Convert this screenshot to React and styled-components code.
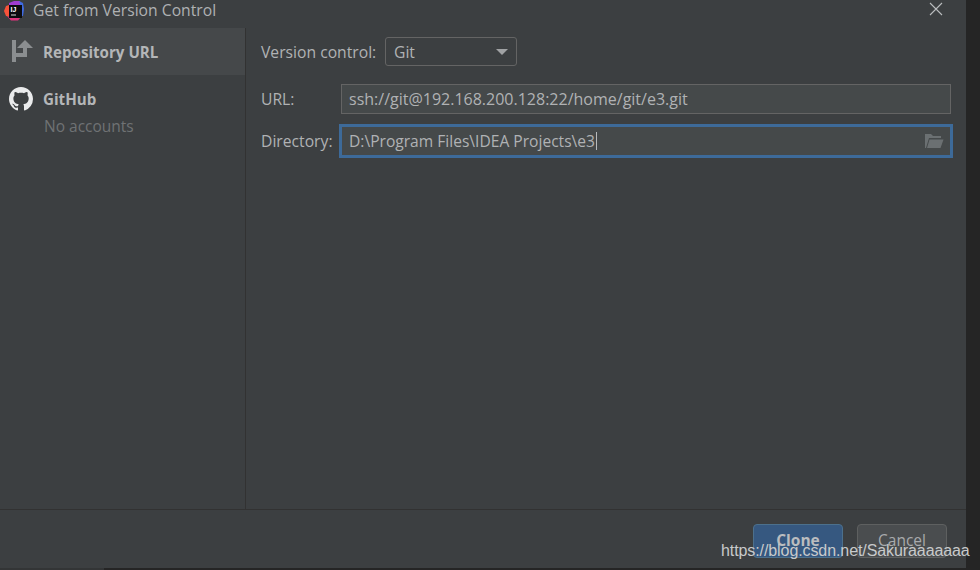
import React from 'react';
import styled, { createGlobalStyle } from 'styled-components';

const Global = createGlobalStyle`
  html, body { margin: 0; padding: 0; background: #262626; }
  body { font-family: "Open Sans", "Noto Sans", sans-serif; }
`;

const Screen = styled.div`
  position: relative;
  width: 980px;
  height: 570px;
  overflow: hidden;
  background: #252525;
`;

const Dialog = styled.div`
  width: 966px;
  height: 568px;
  background: #3c3f41;
  display: flex;
  flex-direction: column;
`;

const BottomEdge = styled.div`
  width: 104px;
  height: 2px;
  background: #333536;
`;

const TitleBar = styled.div`
  height: 28px;
  display: flex;
  align-items: center;
  padding: 0 23px 6px 4px;
  box-sizing: border-box;
  color: #afb1b3;
  font-size: 15.7px;
`;

const Title = styled.span`
  margin-left: 9px;
  margin-top: -2px;
  flex: 1;
`;

const CloseWrap = styled.div`
  display: flex;
  margin-top: -4px;
`;

const Main = styled.div`
  flex: 1;
  display: flex;
  min-height: 0;
  border-bottom: 1px solid #323232;
`;

const Sidebar = styled.div`
  width: 245px;
  border-right: 1px solid #323232;
`;

const SideItem = styled.div`
  height: 47px;
  display: flex;
  align-items: center;
  padding-left: 9px;
  gap: 10px;
  background: ${(p) => (p.$active ? '#45484a' : 'transparent')};
  color: #b4b6b8;
  font-size: 15.15px;
  font-weight: 700;
`;

const SideNote = styled.div`
  padding-left: 44px;
  margin-top: -7px;
  color: #6f7274;
  font-size: 15.5px;
`;

const Form = styled.div`
  flex: 1;
  padding: 9px 15px 0 15px;
  display: flex;
  flex-direction: column;
`;

const Row = styled.div`
  display: flex;
  align-items: center;
  margin-bottom: ${(p) => p.$gap}px;
  color: #b0b2b4;
  font-size: 15.7px;
`;

const Label = styled.div`
  width: ${(p) => p.$width}px;
  flex-shrink: 0;
`;

const Select = styled.div`
  width: 132px;
  height: 29px;
  box-sizing: border-box;
  border: 1px solid #646464;
  border-radius: 3px;
  background: #3c3f41;
  display: flex;
  align-items: center;
  justify-content: space-between;
  padding: 0 8px 0 8px;
`;

const Arrow = styled.div`
  width: 0;
  height: 0;
  border-left: 6px solid transparent;
  border-right: 6px solid transparent;
  border-top: 6px solid #a0a2a4;
`;

const Input = styled.div`
  flex: 1;
  height: 30px;
  box-sizing: border-box;
  border: 1px solid #646464;
  background: #45494a;
  display: flex;
  align-items: center;
  padding: 0 7px;
  font-size: 16px;
`;

const FocusInput = styled(Input)`
  height: 34px;
  border: 3px solid #3d6a99;
  margin-left: -2px;
  margin-right: -2px;
  padding: 0 6px 0 7px;
  font-size: 15.6px;
`;

const Caret = styled.span`
  width: 1px;
  height: 18px;
  background: #b8babc;
  margin-left: 1px;
`;

const Spacer = styled.div`
  flex: 1;
`;

const Footer = styled.div`
  height: 58px;
  display: flex;
  justify-content: flex-end;
  align-items: flex-start;
  gap: 14px;
  padding: 14px 19px 0 0;
  box-sizing: border-box;
`;

const Button = styled.div`
  width: 90px;
  height: 34px;
  box-sizing: border-box;
  border-radius: 4px;
  border: 1px solid ${(p) => (p.$primary ? '#4c708c' : '#5e6060')};
  background: ${(p) => (p.$primary ? '#365880' : '#4a4d4f')};
  color: ${(p) => (p.$primary ? '#bbbdbf' : '#a8aaac')};
  font-size: 15.5px;
  font-weight: ${(p) => (p.$primary ? 700 : 400)};
  text-align: center;
  line-height: 30px;
`;

const Watermark = styled.div`
  position: absolute;
  left: 721px;
  top: 541px;
  color: #c8cacb;
  font-family: "Liberation Sans", Arial, sans-serif;
  font-size: 16px;
  letter-spacing: -0.09px;
  line-height: 20px;
`;

const IdeaIcon = () => (
  <svg width="20" height="22" viewBox="0 0 20 22">
    <path d="M0 11 L2 6 L8 4 L8 17 L2 16 Z" fill="#f8523a" />
    <path d="M5 3 L10 1 L16 1 L17 6 L5 6 Z" fill="#a03cd0" />
    <path d="M15 1 L19 3 L20 9 L19 16 L16 16 L16 4 Z" fill="#3f6ae0" />
    <path d="M3 16 L8 17 L17 17 L14 20.5 L7 20.5 Z" fill="#e0357f" />
    <rect x="5" y="5" width="13" height="13" fill="#0b0b10" />
    <rect x="7" y="14.5" width="5" height="1" fill="#d8d8d8" />
    <text x="6.6" y="12" fontSize="7" fontWeight="700" fill="#fff" fontFamily="Liberation Sans">IJ</text>
  </svg>
);

const RepoIcon = () => (
  <svg width="24" height="23" viewBox="0 0 24 23">
    <path d="M3 0h4v22H3z" fill="#8b8e90" />
    <path d="M7 13h7V8H8l8-8 8 8h-6v9H7z" fill="#8b8e90" />
  </svg>
);

const GithubIcon = () => (
  <svg width="24" height="24" viewBox="0 0 16 16">
    <path
      fill="#eaebec"
      d="M8 0C3.58 0 0 3.58 0 8c0 3.54 2.29 6.53 5.47 7.59.4.07.55-.17.55-.38 0-.19-.01-.82-.01-1.49-2.01.37-2.53-.49-2.69-.94-.09-.23-.48-.94-.82-1.13-.28-.15-.68-.52-.01-.53.63-.01 1.08.58 1.23.82.72 1.21 1.87.87 2.33.66.07-.52.28-.87.51-1.07-1.78-.2-3.64-.89-3.64-3.95 0-.87.31-1.59.82-2.15-.08-.2-.36-1.02.08-2.12 0 0 .67-.21 2.2.82.64-.18 1.32-.27 2-.27s1.36.09 2 .27c1.53-1.04 2.2-.82 2.2-.82.44 1.1.16 1.92.08 2.12.51.56.82 1.27.82 2.15 0 3.07-1.87 3.75-3.65 3.95.29.25.54.73.54 1.48 0 1.07-.01 1.93-.01 2.2 0 .21.15.46.55.38A8.01 8.01 0 0 0 16 8c0-4.42-3.58-8-8-8z"
    />
  </svg>
);

const FolderIcon = () => (
  <svg width="20" height="16" viewBox="0 0 20 16">
    <path d="M1 1h6l2 2h8v2H5L2 15H1z" fill="#6b7072" />
    <path d="M5.5 6.5H19.5L16.5 15H3z" fill="#6b7072" />
  </svg>
);

const CloseIcon = () => (
  <svg width="14" height="14" viewBox="0 0 14 14">
    <path d="M1 1l12 12M13 1L1 13" stroke="#bbbdbf" strokeWidth="1.1" />
  </svg>
);

export default function App() {
  return (
    <Screen>
      <Global />
      <Dialog>
        <TitleBar>
          <IdeaIcon />
          <Title>Get from Version Control</Title>
          <CloseWrap>
            <CloseIcon />
          </CloseWrap>
        </TitleBar>
        <Main>
          <Sidebar>
            <SideItem $active>
              <RepoIcon />
              Repository URL
            </SideItem>
            <SideItem>
              <GithubIcon />
              GitHub
            </SideItem>
            <SideNote>No accounts</SideNote>
          </Sidebar>
          <Form>
            <Row $gap={18}>
              <Label $width={124}>Version control:</Label>
              <Select>
                Git
                <Arrow />
              </Select>
            </Row>
            <Row $gap={10}>
              <Label $width={80}>URL:</Label>
              <Input>ssh://git@192.168.200.128:22/home/git/e3.git</Input>
            </Row>
            <Row $gap={0}>
              <Label $width={80}>Directory:</Label>
              <FocusInput>
                D:\Program Files\IDEA Projects\e3
                <Caret />
                <Spacer />
                <FolderIcon />
              </FocusInput>
            </Row>
          </Form>
        </Main>
        <Footer>
          <Button $primary>Clone</Button>
          <Button>Cancel</Button>
        </Footer>
      </Dialog>
      <BottomEdge />
      <Watermark>https://blog.csdn.net/Sakuraaaaaaa</Watermark>
    </Screen>
  );
}
